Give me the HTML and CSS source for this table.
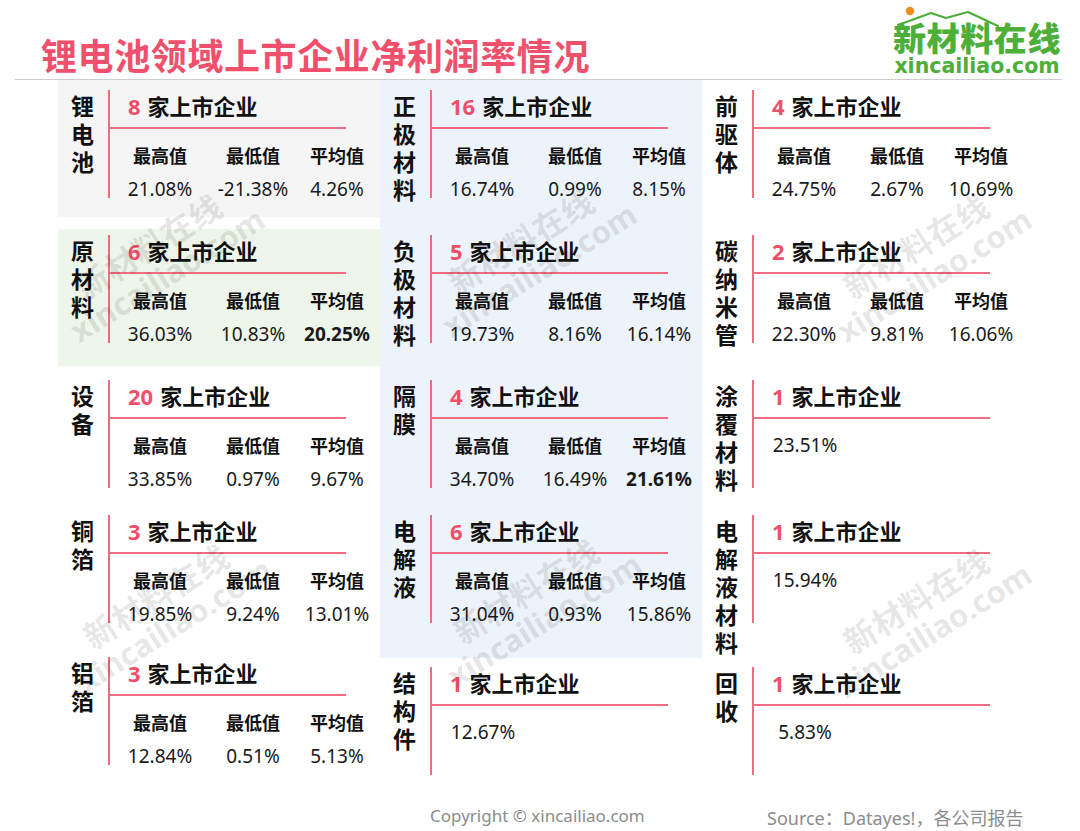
FILE: index.html
```html
<!DOCTYPE html>
<html lang="zh-CN">
<head>
<meta charset="utf-8">
<title>锂电池领域上市企业净利润率情况</title>
<link rel="stylesheet" href="styles.css">
</head>
<body>
<header class="top">
  <h1 class="title">锂电池领域上市企业净利润率情况</h1>
  <div class="logo">
    <svg class="roof" width="170" height="30" viewBox="0 0 170 30">
      <polyline points="6,25 39,13 54,18 76,12 106,26" fill="none" stroke="#4dae38" stroke-width="2.2" stroke-linejoin="round" stroke-linecap="round"/>
      <circle cx="18" cy="11" r="4.2" fill="#f28c1a"/>
    </svg>
    <div class="logo-cn">新材料在线</div>
    <div class="logo-en">xincailiao.com</div>
  </div>
</header>

<main class="board">
  <section class="col">
    <div class="panel gray">
      <div class="cell">
        <div class="label">锂电池</div>
        <div class="body">
          <div class="head"><em>8</em> 家上市企业</div>
          <div class="stats">
            <span class="k">最高值</span><span class="k">最低值</span><span class="k">平均值</span>
            <span class="v">21.08%</span><span class="v">-21.38%</span><span class="v">4.26%</span>
          </div>
        </div>
      </div>
    </div>
    <div class="panel green">
      <div class="cell">
        <div class="label">原材料</div>
        <div class="body">
          <div class="head"><em>6</em> 家上市企业</div>
          <div class="stats">
            <span class="k">最高值</span><span class="k">最低值</span><span class="k">平均值</span>
            <span class="v">36.03%</span><span class="v">10.83%</span><span class="v b">20.25%</span>
          </div>
        </div>
      </div>
    </div>
    <div class="cell after-panel h135">
      <div class="label">设备</div>
      <div class="body">
        <div class="head"><em>20</em> 家上市企业</div>
        <div class="stats">
          <span class="k">最高值</span><span class="k">最低值</span><span class="k">平均值</span>
          <span class="v">33.85%</span><span class="v">0.97%</span><span class="v">9.67%</span>
        </div>
      </div>
    </div>
    <div class="cell h142">
      <div class="label">铜箔</div>
      <div class="body">
        <div class="head"><em>3</em> 家上市企业</div>
        <div class="stats">
          <span class="k">最高值</span><span class="k">最低值</span><span class="k">平均值</span>
          <span class="v">19.85%</span><span class="v">9.24%</span><span class="v">13.01%</span>
        </div>
      </div>
    </div>
    <div class="cell">
      <div class="label">铝箔</div>
      <div class="body">
        <div class="head"><em>3</em> 家上市企业</div>
        <div class="stats">
          <span class="k">最高值</span><span class="k">最低值</span><span class="k">平均值</span>
          <span class="v">12.84%</span><span class="v">0.51%</span><span class="v">5.13%</span>
        </div>
      </div>
    </div>
  </section>

  <section class="col">
    <div class="blue">
      <div class="cell h145">
        <div class="label">正极材料</div>
        <div class="body">
          <div class="head"><em>16</em> 家上市企业</div>
          <div class="stats">
            <span class="k">最高值</span><span class="k">最低值</span><span class="k">平均值</span>
            <span class="v">16.74%</span><span class="v">0.99%</span><span class="v">8.15%</span>
          </div>
        </div>
      </div>
      <div class="cell h145">
        <div class="label">负极材料</div>
        <div class="body">
          <div class="head"><em>5</em> 家上市企业</div>
          <div class="stats">
            <span class="k">最高值</span><span class="k">最低值</span><span class="k">平均值</span>
            <span class="v">19.73%</span><span class="v">8.16%</span><span class="v">16.14%</span>
          </div>
        </div>
      </div>
      <div class="cell h135">
        <div class="label">隔膜</div>
        <div class="body">
          <div class="head"><em>4</em> 家上市企业</div>
          <div class="stats">
            <span class="k">最高值</span><span class="k">最低值</span><span class="k">平均值</span>
            <span class="v">34.70%</span><span class="v">16.49%</span><span class="v b">21.61%</span>
          </div>
        </div>
      </div>
      <div class="cell">
        <div class="label">电解液</div>
        <div class="body">
          <div class="head"><em>6</em> 家上市企业</div>
          <div class="stats">
            <span class="k">最高值</span><span class="k">最低值</span><span class="k">平均值</span>
            <span class="v">31.04%</span><span class="v">0.93%</span><span class="v">15.86%</span>
          </div>
        </div>
      </div>
    </div>
    <div class="cell after-blue">
      <div class="label">结构件</div>
      <div class="body">
        <div class="head"><em>1</em> 家上市企业</div>
        <div class="single">12.67%</div>
      </div>
    </div>
  </section>

  <section class="col col3">
    <div class="cell h145">
      <div class="label">前驱体</div>
      <div class="body">
        <div class="head"><em>4</em> 家上市企业</div>
        <div class="stats">
          <span class="k">最高值</span><span class="k">最低值</span><span class="k">平均值</span>
          <span class="v">24.75%</span><span class="v">2.67%</span><span class="v">10.69%</span>
        </div>
      </div>
    </div>
    <div class="cell h145">
      <div class="label">碳纳米管</div>
      <div class="body">
        <div class="head"><em>2</em> 家上市企业</div>
        <div class="stats">
          <span class="k">最高值</span><span class="k">最低值</span><span class="k">平均值</span>
          <span class="v">22.30%</span><span class="v">9.81%</span><span class="v">16.06%</span>
        </div>
      </div>
    </div>
    <div class="cell h135">
      <div class="label">涂覆材料</div>
      <div class="body">
        <div class="head"><em>1</em> 家上市企业</div>
        <div class="single">23.51%</div>
      </div>
    </div>
    <div class="cell h152">
      <div class="label">电解液材料</div>
      <div class="body">
        <div class="head"><em>1</em> 家上市企业</div>
        <div class="single">15.94%</div>
      </div>
    </div>
    <div class="cell">
      <div class="label">回收</div>
      <div class="body">
        <div class="head"><em>1</em> 家上市企业</div>
        <div class="single">5.83%</div>
      </div>
    </div>
  </section>
</main>

<footer class="foot">
  <span class="copy">Copyright © xincailiao.com</span>
  <span class="src">Source：Datayes!，各公司报告</span>
</footer>

<div class="wm wm1"><div class="cn">新材料在线</div><div class="en">xincailiao.com</div></div>
<div class="wm wm2"><div class="cn">新材料在线</div><div class="en">xincailiao.com</div></div>
<div class="wm wm3"><div class="cn">新材料在线</div><div class="en">xincailiao.com</div></div>
<div class="wm wm4"><div class="cn">新材料在线</div><div class="en">xincailiao.com</div></div>
<div class="wm wm5"><div class="cn">新材料在线</div><div class="en">xincailiao.com</div></div>
<div class="wm wm6"><div class="cn">新材料在线</div><div class="en">xincailiao.com</div></div>
</body>
</html>
```

FILE: styles.css
```css
* { box-sizing: border-box; }

body {
  margin: 0;
  width: 1080px;
  height: 831px;
  overflow: hidden;
  position: relative;
  background: #ffffff;
  color: #151515;
  font-family: "Noto Sans", "Noto Sans CJK SC", sans-serif;
}

/* ---------- header ---------- */
.top {
  display: flex;
  justify-content: space-between;
  height: 80px;
  margin: 0 18px 0 15px;
  border-bottom: 1px solid #cdcdcd;
}

.title {
  margin: 0;
  padding: 32px 0 0 26px;
  font: 700 36px/44px "Noto Sans CJK SC", sans-serif;
  letter-spacing: 0.6px;
  color: #f0506c;
}

.logo {
  position: relative;
  width: 170px;
  padding-top: 21px;
  text-align: center;
  color: #4dae38;
}

.roof {
  position: absolute;
  left: 0;
  top: 0;
}

.logo-cn {
  position: relative;
  font: 900 33px/33px "Noto Sans CJK SC", sans-serif;
  letter-spacing: 0.6px;
}

.logo-en {
  font: 700 20.5px/24px "DejaVu Sans", sans-serif;
  margin-top: 0;
}

/* ---------- board ---------- */
.board {
  display: flex;
  align-items: flex-start;
  height: 722px;
  padding-left: 58px;
}

.col {
  width: 322px;
  display: flex;
  flex-direction: column;
}

.col3 { padding-top: 10px; }

.panel {
  height: 137px;
}

.panel.gray {
  background: #f5f5f5;
  padding-top: 10px;
}

.panel.green {
  background: #eef5eb;
  margin-top: 12px;
  padding-top: 6px;
}

.blue {
  background: #edf3fa;
  height: 578px;
  padding-top: 10px;
}

.after-panel { margin-top: 14px; }
.after-blue { margin-top: 9px; }

.h135 { height: 135px; }
.h142 { height: 142px; }
.h145 { height: 145px; }
.h152 { height: 152px; }

.cell {
  display: flex;
  align-items: flex-start;
}

.label {
  width: 50px;
  padding: 1px 14px 0 13px;
  font: 700 23px/28px "Noto Sans CJK SC", sans-serif;
  color: #111;
  word-break: break-all;
}

.body {
  border-left: 2px solid #f06c80;
  min-height: 108px;
}

.head {
  width: 238px;
  margin-left: -2px;
  padding-left: 20px;
  height: 39px;
  border-bottom: 2px solid #f06c80;
  font: 700 22px/31px "Noto Sans CJK SC", sans-serif;
  color: #111;
}

.head em {
  font-style: normal;
  color: #ef4f69;
  font-family: "Noto Sans", "Noto Sans CJK SC", sans-serif;
  margin-right: 2px;
}

.stats {
  display: grid;
  grid-template-columns: 100px 86px 82px;
  grid-template-rows: 26px 18px;
  row-gap: 12px;
  margin-top: 13px;
  text-align: center;
  white-space: nowrap;
}

.k {
  font: 700 18px/26px "Noto Sans CJK SC", sans-serif;
  color: #111;
}

.v {
  font: 400 19px/18px "Noto Sans", "Noto Sans CJK SC", sans-serif;
  color: #1a1a1a;
}

.v.b { font-weight: 700; }

.single {
  width: 102px;
  margin-top: 13px;
  text-align: center;
  font: 400 19px/26px "Noto Sans", "Noto Sans CJK SC", sans-serif;
  color: #1a1a1a;
}

/* ---------- footer ---------- */
.foot {
  display: flex;
  align-items: flex-start;
  padding-left: 430px;
  line-height: 28px;
  color: #8c8c8c;
}

.copy {
  width: 337px;
  font-size: 17px;
  font-family: "Noto Sans", sans-serif;
}

.src {
  padding-top: 2px;
  font-size: 18px;
  font-family: "Noto Sans", "Noto Sans CJK SC", sans-serif;
}

/* ---------- watermarks ---------- */
.wm {
  position: absolute;
  width: 280px;
  height: 72px;
  text-align: center;
  transform: rotate(-32deg);
  color: rgba(0, 0, 0, 0.115);
  pointer-events: none;
  z-index: 5;
  white-space: nowrap;
}

.wm .cn {
  font: 700 32px/36px "Noto Sans CJK SC", sans-serif;
  letter-spacing: 1px;
}

.wm .en {
  font: 700 31px/34px "Noto Sans", sans-serif;
}

.wm1 { left: 18px;  top: 224px; }
.wm2 { left: 390px; top: 219px; }
.wm3 { left: 785px; top: 224px; }
.wm4 { left: 25px;  top: 574px; }
.wm5 { left: 395px; top: 569px; }
.wm6 { left: 785px; top: 579px; }
```
